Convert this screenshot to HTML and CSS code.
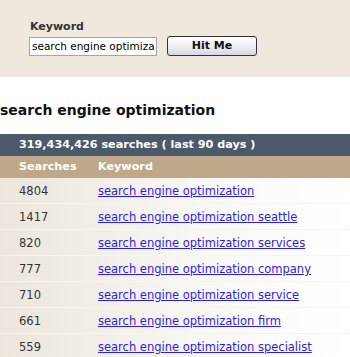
FILE: index.html
```html
<!DOCTYPE html>
<html>
<head>
<meta charset="utf-8">
<link rel="stylesheet" href="styles.css">
</head>
<body>
<div class="panel">
  <div class="label">Keyword</div>
  <div class="form-row">
    <div class="input">search engine optimiza</div>
    <div class="btn">Hit Me</div>
  </div>
</div>
<h1 class="title">search engine optimization</h1>
<div class="summary">319,434,426 searches ( last 90 days )</div>
<div class="head"><span class="c1">Searches</span><span class="c2">Keyword</span></div>
<div class="row"><span class="c1">4804</span><a class="c2" href="#">search engine optimization</a></div>
<div class="row"><span class="c1">1417</span><a class="c2" href="#">search engine optimization seattle</a></div>
<div class="row"><span class="c1">820</span><a class="c2" href="#">search engine optimization services</a></div>
<div class="row"><span class="c1">777</span><a class="c2" href="#">search engine optimization company</a></div>
<div class="row"><span class="c1">710</span><a class="c2" href="#">search engine optimization service</a></div>
<div class="row"><span class="c1">661</span><a class="c2" href="#">search engine optimization firm</a></div>
<div class="row"><span class="c1">559</span><a class="c2" href="#">search engine optimization specialist</a></div>
</body>
</html>
```
FILE: styles.css
```css
html, body { margin: 0; padding: 0; background: #fff; }
body { font-family: "DejaVu Sans", Verdana, sans-serif; font-size: 11.5px; color: #333; overflow: hidden; }
.panel { background: #efe8dd; height: 77px; box-sizing: border-box; padding: 20px 0 0 30px; }
.label { font-weight: bold; font-size: 11px; line-height: 14px; color: #333; margin-bottom: 2px; }
.form-row { display: flex; align-items: flex-start; gap: 10px; }
.input { width: 124px; height: 17px; border: 1px solid #a5a5a5; background: #fff; color: #000; font-size: 10.5px; line-height: 17px; padding-left: 2px; overflow: hidden; white-space: nowrap; margin-left: -1px; margin-top: 1px; }
.btn { width: 88px; height: 18px; border: 1px solid #333; border-radius: 3px; background: linear-gradient(#ffffff, #f3f3f8 40%, #d7d6e6); font-weight: bold; font-size: 11px; line-height: 18px; text-align: center; color: #111; }
.title { margin: 0; padding: 24px 0 0 0; height: 33px; font-size: 14px; font-weight: bold; color: #111; line-height: 18px; }
.summary { background: #4c596b; color: #fff; font-weight: bold; font-size: 11.2px; height: 22px; line-height: 22px; padding-left: 19px; }
.head { background: #bfa889; color: #fff; font-weight: bold; height: 22px; line-height: 22px; display: flex; font-size: 11.2px; }
.c1 { width: 79px; padding-left: 19px; flex: none; }
.row { display: flex; height: 25px; line-height: 26px; border-bottom: 1px solid #f8f5f0; background: linear-gradient(to right, #ece6db, #faf8f5 60%, #ffffff); color: #333; }
a.c2 { color: #2a1fe6; text-decoration: underline; }
```
